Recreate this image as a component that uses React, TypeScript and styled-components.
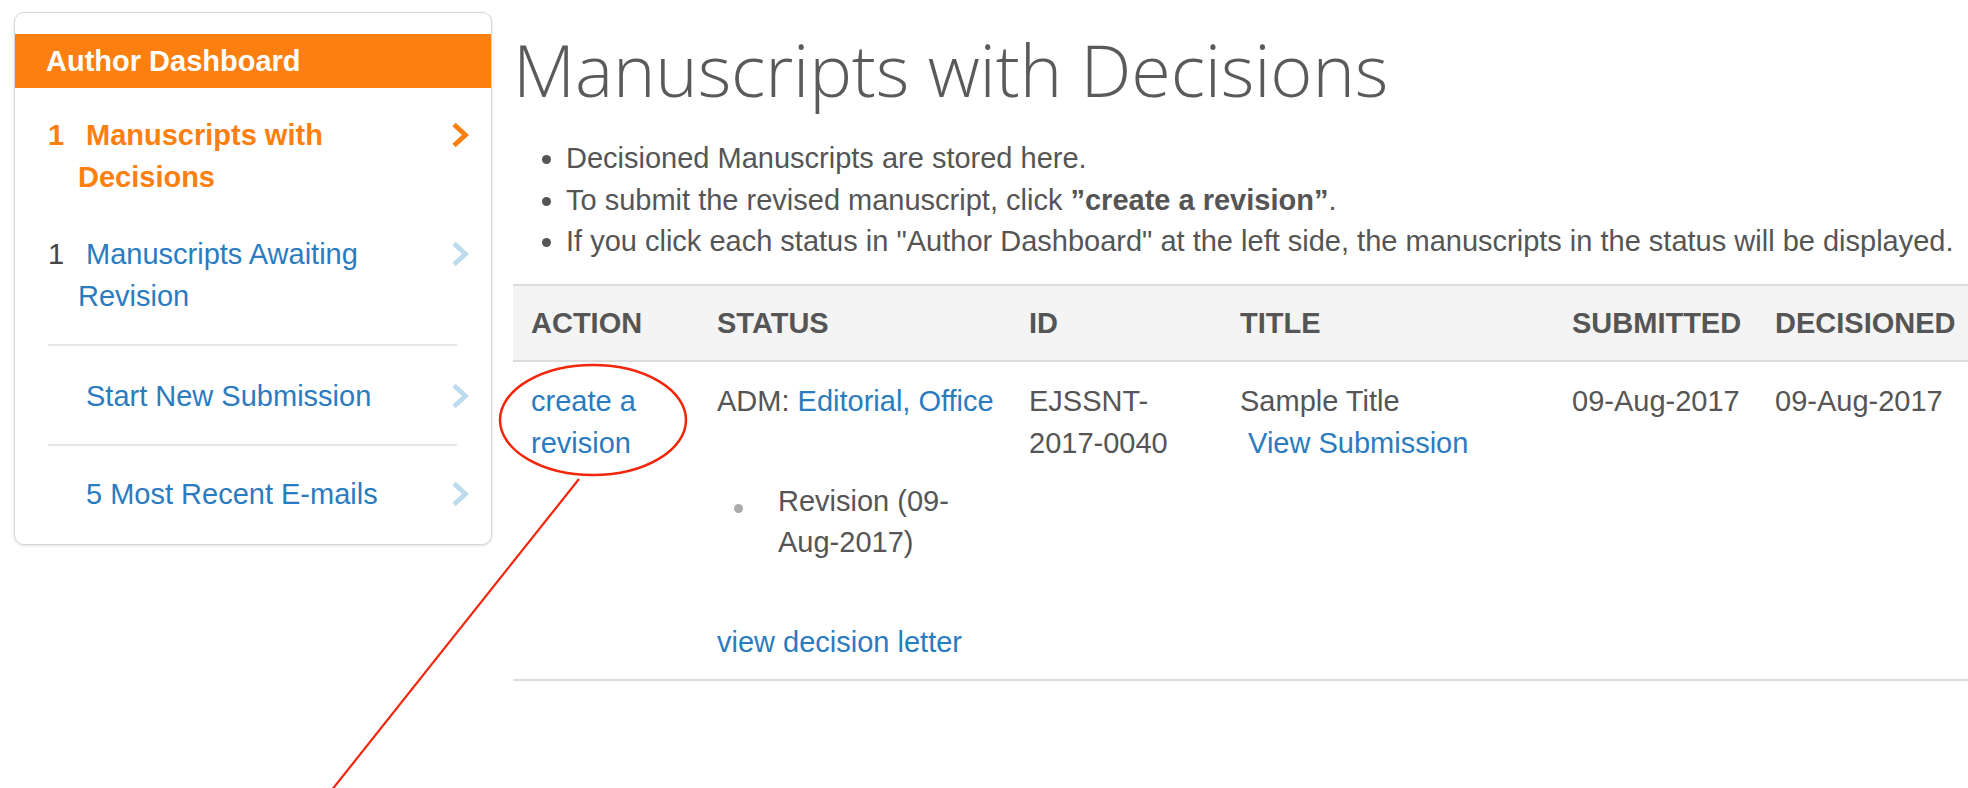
import styled, { createGlobalStyle } from "styled-components";

const ORANGE = "#fc7f0f";
const LINK = "#2b7bbf";
const TEXT = "#555";
const COLUMNS = "186px 312px 211px 332px 203px 1fr";

const GlobalStyle = createGlobalStyle`
  html, body {
    margin: 0;
    padding: 0;
    background: #fff;
    overflow: hidden;
  }
  body {
    font-family: "Liberation Sans", Arial, Helvetica, sans-serif;
    font-size: 29px;
    line-height: 41.5px;
    color: ${TEXT};
  }
`;

const Page = styled.div`
  position: relative;
  display: flex;
  align-items: flex-start;
  width: 1968px;
  height: 788px;
  overflow: hidden;
`;

/* ---------- side menu ---------- */

const SideCard = styled.aside`
  flex: 0 0 478px;
  box-sizing: border-box;
  margin: 12px 21px 0 14px;
  padding-top: 21px;
  background: #fff;
  border: 1px solid #d6d6d6;
  border-radius: 10px;
  box-shadow: 0 1px 3px rgba(0, 0, 0, 0.12);
  overflow: hidden;
`;

const CardHeader = styled.div`
  height: 54px;
  line-height: 54px;
  padding-left: 31px;
  background: ${ORANGE};
  color: #fff;
  font-weight: 700;
`;

const StatusGroup = styled.div`
  display: flex;
  flex-direction: column;
  gap: 36px;
  padding: 27px 0;
`;

const NavItem = styled.a<{ $active?: boolean; $pad?: string }>`
  display: flex;
  align-items: flex-start;
  padding: ${(p) => p.$pad ?? "0"};
  padding-left: 33px;
  padding-right: 22px;
  color: ${(p) => (p.$active ? ORANGE : LINK)};
  font-weight: ${(p) => (p.$active ? 700 : 400)};
  text-decoration: none;
  cursor: pointer;
`;

const Label = styled.span`
  flex: 1;
  margin-right: 12px;
  padding-left: 30px;
  text-indent: -30px;
`;

const Count = styled.span<{ $active?: boolean }>`
  display: inline-block;
  width: 38px;
  text-indent: 0;
  color: ${(p) => (p.$active ? ORANGE : "#444")};
`;

const Divider = styled.hr`
  height: 2px;
  margin: 0 34px 0 33px;
  border: 0;
  background: #e6e6e6;
`;

const ChevronIcon = styled.svg`
  flex: 0 0 18px;
  margin-top: 7px;
`;

function Chevron({ active }: { active?: boolean }) {
  return (
    <ChevronIcon width="18" height="26" viewBox="0 0 18 26">
      <path
        d="M3 2.5 L14.5 13 L3 23.5"
        fill="none"
        stroke={active ? ORANGE : "#bcdcee"}
        strokeWidth="4.8"
      />
    </ChevronIcon>
  );
}

type MenuEntry = { count?: string; label: string; active?: boolean };

function MenuLink({ count, label, active, pad }: MenuEntry & { pad?: string }) {
  return (
    <NavItem $active={active} $pad={pad}>
      <Label>
        <Count $active={active}>{count}</Count>
        {label}
      </Label>
      <Chevron active={active} />
    </NavItem>
  );
}

/* ---------- main content ---------- */

const Main = styled.main`
  flex: 1;
  min-width: 0;
  padding-top: 33px;
`;

const Title = styled.h1`
  margin: 0;
  font-family: "Open Sans", "Noto Sans", sans-serif;
  font-weight: 300;
  font-size: 72px;
  line-height: 72px;
  letter-spacing: -0.15px;
  color: #5a5a5a;
`;

const Notes = styled.ul`
  margin: 33px 0 21px;
  padding-left: 53px;
  list-style: disc;
  white-space: nowrap;
`;

const HeadRow = styled.div`
  display: grid;
  grid-template-columns: ${COLUMNS};
  background: #f4f4f4;
  border-top: 2px solid #dcdcdc;
  border-bottom: 2px solid #dcdcdc;
`;

const HeadCell = styled.div`
  padding: 17px 0 16px 18px;
  font-weight: 700;
  white-space: nowrap;
`;

const BodyRow = styled.div`
  display: grid;
  grid-template-columns: ${COLUMNS};
  border-bottom: 2px solid #dcdcdc;
`;

const Cell = styled.div`
  padding: 19px 0 16px 18px;
`;

const Link = styled.a`
  color: ${LINK};
  text-decoration: none;
  cursor: pointer;
`;

const History = styled.ul`
  margin: 58px 0 58px;
  padding: 0;
  list-style: none;
`;

const HistoryItem = styled.li`
  display: flex;
  align-items: flex-start;
`;

const Dot = styled.span`
  flex: 0 0 61px;
  position: relative;
  height: 41.5px;

  &::after {
    content: "";
    position: absolute;
    left: 17px;
    top: 23px;
    width: 9px;
    height: 9px;
    border-radius: 50%;
    background: #ababab;
  }
`;

const HistoryText = styled.span`
  flex: 1;
  padding-right: 16px;
`;

/* red markup drawn over the table */
const Markup = styled.svg`
  position: absolute;
  left: 0;
  top: 0;
  pointer-events: none;
`;

const headers = ["ACTION", "STATUS", "ID", "TITLE", "SUBMITTED", "DECISIONED"];

export default function App() {
  return (
    <Page>
      <GlobalStyle />
      <SideCard>
        <CardHeader>Author Dashboard</CardHeader>
        <StatusGroup>
          <MenuLink count="1" label="Manuscripts with Decisions" active />
          <MenuLink count="1" label="Manuscripts Awaiting Revision" />
        </StatusGroup>
        <Divider />
        <MenuLink label="Start New Submission" pad="30px 0 26px" />
        <Divider />
        <MenuLink label="5 Most Recent E-mails" pad="28px 0 29px" />
      </SideCard>

      <Main>
        <Title>Manuscripts with Decisions</Title>
        <Notes>
          <li>Decisioned Manuscripts are stored here.</li>
          <li>
            To submit the revised manuscript, click <b>”create a revision”</b>.
          </li>
          <li>
            If you click each status in "Author Dashboard" at the left side, the
            manuscripts in the status will be displayed.
          </li>
        </Notes>

        <HeadRow>
          {headers.map((h) => (
            <HeadCell key={h}>{h}</HeadCell>
          ))}
        </HeadRow>
        <BodyRow>
          <Cell>
            <Link>create a revision</Link>
          </Cell>
          <Cell>
            ADM: <Link>Editorial, Office</Link>
            <History>
              <HistoryItem>
                <Dot />
                <HistoryText>
                  Revision (09-<wbr />
                  Aug-2017)
                </HistoryText>
              </HistoryItem>
            </History>
            <Link>view decision letter</Link>
          </Cell>
          <Cell>
            EJSSNT-
            <wbr />
            2017-0040
          </Cell>
          <Cell>
            Sample Title
            <br />
            {"\u00a0"}
            <Link>View Submission</Link>
          </Cell>
          <Cell>09-Aug-2017</Cell>
          <Cell>09-Aug-2017</Cell>
        </BodyRow>
      </Main>

      <Markup width="1968" height="788" viewBox="0 0 1968 788">
        <ellipse cx="593" cy="420" rx="93" ry="55" fill="none" stroke="#f2260c" strokeWidth="2.5" />
        <line x1="579" y1="479" x2="331" y2="791" stroke="#f2260c" strokeWidth="2.2" />
      </Markup>
    </Page>
  );
}
